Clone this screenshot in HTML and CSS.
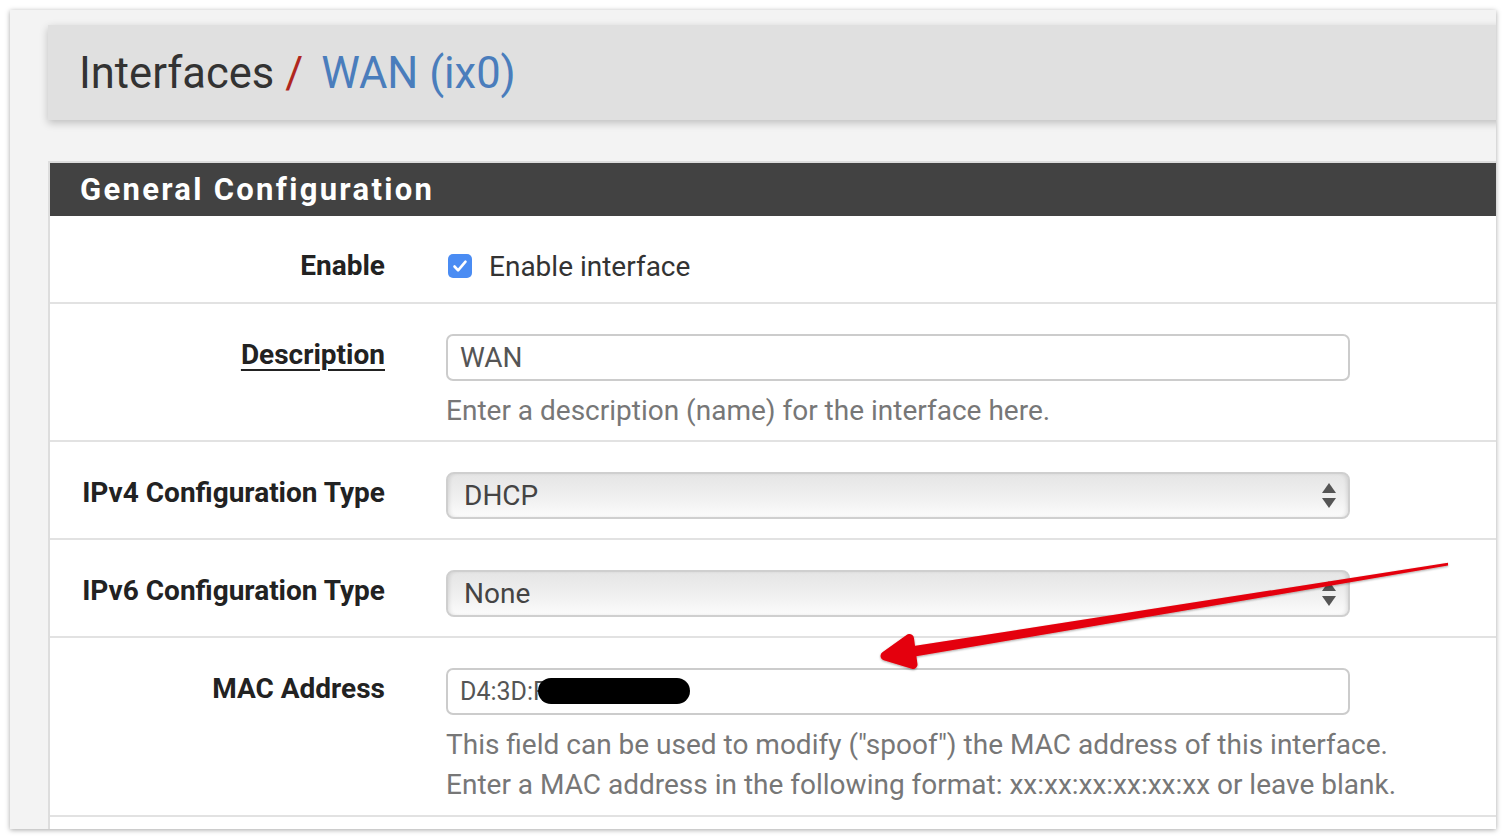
FILE: index.html
```html
<!DOCTYPE html>
<html>
<head>
<meta charset="utf-8">
<title>Interfaces / WAN (ix0)</title>
<link rel="stylesheet" href="styles.css">
</head>
<body>
<div class="window">
  <div class="content">
    <div class="pageheader">
      <h1 class="crumbs"><span class="crumb">Interfaces</span><span class="sep">/</span><span class="current">WAN (ix0)</span></h1>
    </div>

    <div class="panel">
      <div class="panel-heading"><h2>General Configuration</h2></div>
      <div class="panel-body">
        <div class="row row-first">
          <div class="label">Enable</div>
          <div class="field">
            <label class="check">
              <span class="box"><svg viewBox="0 0 24 24" width="24" height="24"><path d="M6.5 12.5l3.6 3.8 7.4-8.6" fill="none" stroke="#fff" stroke-width="2.6" stroke-linecap="round" stroke-linejoin="round"/></svg></span>
              <span>Enable interface</span>
            </label>
          </div>
        </div>

        <div class="row">
          <div class="label"><span class="underlined">Description</span></div>
          <div class="field">
            <div class="input">WAN</div>
            <div class="help">Enter a description (name) for the interface here.</div>
          </div>
        </div>

        <div class="row">
          <div class="label">IPv4 Configuration Type</div>
          <div class="field">
            <div class="select"><span>DHCP</span><span class="arrows"><i class="up"></i><i class="down"></i></span></div>
          </div>
        </div>

        <div class="row">
          <div class="label">IPv6 Configuration Type</div>
          <div class="field">
            <div class="select"><span>None</span><span class="arrows"><i class="up"></i><i class="down"></i></span></div>
          </div>
        </div>

        <div class="row row-last">
          <div class="label">MAC Address</div>
          <div class="field">
            <div class="input input-mac">D4:3D:F<span class="redact"></span></div>
            <div class="help">This field can be used to modify ("spoof") the MAC address of this interface.<br>Enter a MAC address in the following format: xx:xx:xx:xx:xx:xx or leave blank.</div>
          </div>
        </div>

        <div class="row row-next"></div>
      </div>
    </div>
  </div>
</div>

<svg class="annotation" width="1506" height="838" viewBox="0 0 1506 838">
  <defs>
    <filter id="sh" x="-5%" y="-20%" width="110%" height="140%">
      <feDropShadow dx="0" dy="1" stdDeviation="1" flood-color="#000" flood-opacity="0.35"/>
    </filter>
  </defs>
  <g filter="url(#sh)" fill="#e4000b" stroke="#e4000b">
    <polygon points="1448,562.8 1448,565.6 906,658 904,647.5" stroke="none"/>
    <path d="M909.5 638.5 L885 656 L913 664.5 Z" stroke-width="9" stroke-linecap="round" stroke-linejoin="round"/>
  </g>
</svg>
</body>
</html>
```

FILE: styles.css
```css
* { box-sizing: border-box; }

html, body {
  margin: 0;
  padding: 0;
  background: #ffffff;
  font-family: Roboto, "Liberation Sans", Arial, sans-serif;
}

body {
  width: 1506px;
  height: 838px;
  overflow: hidden;
  position: relative;
}

.window {
  margin: 10px 0 0 10px;
  width: 1486px;
  height: 819px;
  background: #f3f3f3;
  box-shadow: 0 1px 5px rgba(0, 0, 0, 0.35);
  overflow: hidden;
}

.content {
  padding: 15px 0 0 38px;
}

.pageheader {
  height: 95px;
  background: #e0e0e0;
  box-shadow: 0 3px 8px rgba(0, 0, 0, 0.22);
  display: flex;
  align-items: center;
  padding-left: 31px;
  margin-right: -20px;
}

.crumbs {
  margin: 0;
  font-weight: 400;
  font-size: 43.5px;
  line-height: 1;
  color: #333;
  display: flex;
  align-items: baseline;
  padding-top: 2px;
}

.sep {
  color: #b0271e;
  margin: 0 18px 0 11px;
}

.current {
  color: #4a7dbc;
}

.panel {
  margin-top: 41px;
  border-left: 2px solid #dddddd;
  background: #fff;
}

.panel-heading {
  height: 55px;
  background: #424242;
  border-top: 2px solid #dcdcdc;
  display: flex;
  align-items: center;
  padding-left: 30px;
}

.panel-heading h2 {
  margin: 0;
  color: #fff;
  font-size: 31px;
  font-weight: 700;
  letter-spacing: 2.3px;
  line-height: 1;
}

.row {
  display: grid;
  grid-template-columns: 335px 1fr;
  column-gap: 61px;
  padding: 30px 0 19px;
  border-bottom: 2px solid #e2e2e2;
}

.row-first {
  padding: 32px 0 18px;
}

.row-first .label {
  line-height: 36px;
}

.row-last {
  padding-bottom: 20px;
}

.row-next {
  height: 40px;
  border-bottom: none;
}

.label {
  text-align: right;
  font-weight: 700;
  font-size: 28px;
  color: #222;
  line-height: 42px;
}

.underlined {
  text-decoration: underline;
  text-decoration-thickness: 2px;
  text-underline-offset: 5px;
}

.field {
  font-size: 28px;
  color: #333;
}

.check {
  display: flex;
  align-items: center;
  gap: 17px;
  height: 36px;
  padding-left: 2px;
}

.box {
  width: 24px;
  height: 24px;
  border-radius: 5px;
  background: #4a8cf3;
  display: block;
}

.box svg { display: block; }

.input {
  width: 904px;
  height: 47px;
  border: 2px solid #cccccc;
  border-radius: 7px;
  background: #fff;
  padding: 0 12px;
  line-height: 43px;
  color: #555;
  position: relative;
}

.input-mac {
  font-size: 25px;
}

.redact {
  position: absolute;
  left: 90px;
  top: 8px;
  width: 152px;
  height: 26px;
  border-radius: 13px;
  background: #000;
}

.select {
  width: 904px;
  height: 47px;
  border: 2px solid #cfcfcf;
  border-radius: 8px;
  background: linear-gradient(to bottom, #e5e5e5 0%, #efefef 50%, #fbfbfb 100%);
  box-shadow: inset 3px 0 4px -2px rgba(0, 0, 0, 0.12), inset -3px 0 4px -2px rgba(0, 0, 0, 0.12);
  padding: 0 16px;
  line-height: 43px;
  color: #444;
  display: flex;
  justify-content: space-between;
  align-items: center;
}

.arrows {
  display: flex;
  flex-direction: column;
  gap: 5px;
  margin-right: -4px;
}

.arrows i {
  display: block;
  width: 0;
  height: 0;
  border-left: 7px solid transparent;
  border-right: 7px solid transparent;
}

.arrows .up { border-bottom: 10px solid #555; }
.arrows .down { border-top: 10px solid #555; }

.help {
  margin: 10px 0 -10px;
  line-height: 40px;
  color: #777;
  font-size: 28px;
  white-space: nowrap;
}

.annotation {
  position: absolute;
  left: 0;
  top: 0;
  pointer-events: none;
}
```
